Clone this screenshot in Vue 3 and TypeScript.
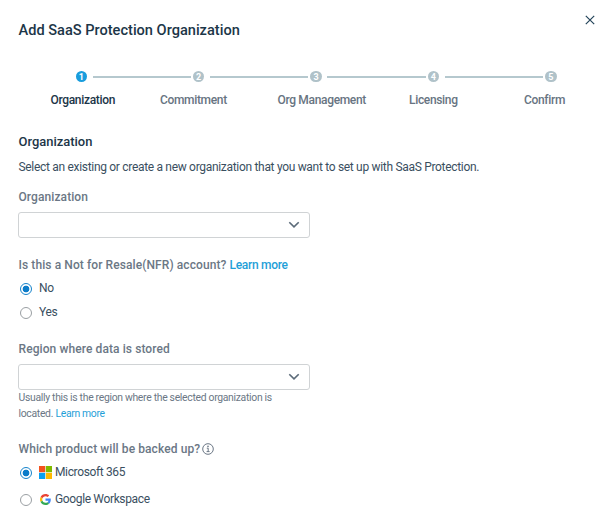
<script setup lang="ts">
import { ref } from 'vue'

interface Step {
  id: number
  label: string
}

const steps: Step[] = [
  { id: 1, label: 'Organization' },
  { id: 2, label: 'Commitment' },
  { id: 3, label: 'Org Management' },
  { id: 4, label: 'Licensing' },
  { id: 5, label: 'Confirm' },
]
const current = ref<number>(1)
const nfr = ref<'no' | 'yes'>('no')
const product = ref<'microsoft' | 'google'>('microsoft')
</script>

<template>
  <main class="dialog">
    <header class="header">
      <h1 class="title">Add SaaS Protection Organization</h1>
      <button class="close" type="button" aria-label="Close">
        <svg width="10" height="10" viewBox="0 0 10 10"><path d="M.8.8 9.2 9.2M9.2.8.8 9.2" /></svg>
      </button>
    </header>

    <nav class="stepper">
      <div class="track">
        <template v-for="step in steps" :key="step.id">
          <span class="dot" :class="{ active: step.id === current }">{{ step.id }}</span>
          <span v-if="step.id < steps.length" class="line"></span>
        </template>
      </div>
      <div class="labels">
        <span v-for="step in steps" :key="step.id" class="label" :class="{ active: step.id === current }">{{ step.label }}</span>
      </div>
    </nav>

    <h2 class="section">Organization</h2>
    <p class="intro">Select an existing or create a new organization that you want to set up with SaaS Protection.</p>

    <div class="field-label org">Organization</div>
    <div class="select" role="combobox" aria-label="Organization">
      <svg width="12" height="8" viewBox="0 0 12 8"><path d="M1.3 1.2 6 5.9 10.7 1.2" /></svg>
    </div>

    <div class="field-label nfr">Is this a Not for Resale(NFR) account? <a class="link">Learn more</a></div>
    <label class="option first" @click="nfr = 'no'">
      <span class="radio" :class="{ checked: nfr === 'no' }"></span><span class="option-text">No</span>
    </label>
    <label class="option second" @click="nfr = 'yes'">
      <span class="radio" :class="{ checked: nfr === 'yes' }"></span><span class="option-text">Yes</span>
    </label>

    <div class="field-label region">Region where data is stored</div>
    <div class="select" role="combobox" aria-label="Region where data is stored">
      <svg width="12" height="8" viewBox="0 0 12 8"><path d="M1.3 1.2 6 5.9 10.7 1.2" /></svg>
    </div>
    <div class="hint">
      <div>Usually this is the region where the selected organization is</div>
      <div class="hint-row"><span>located.</span><a class="link">Learn more</a></div>
    </div>

    <div class="field-label product">
      <span>Which product will be backed up?</span>
      <svg class="info" width="12" height="12" viewBox="0 0 12 12">
        <circle cx="6" cy="6" r="5.3" />
        <path d="M4.8 5.2H6.2V8.5M4.6 8.6H7.6" />
        <circle class="info-dot" cx="6" cy="3.4" r=".8" />
      </svg>
    </div>
    <label class="option microsoft" @click="product = 'microsoft'">
      <span class="radio" :class="{ checked: product === 'microsoft' }"></span>
      <svg class="brand" width="13" height="13" viewBox="0 0 13 13">
        <path fill="#f4511e" d="M0 0h6.2v6.2H0z" />
        <path fill="#7fba00" d="M6.8 0H13v6.2H6.8z" />
        <path fill="#0a9ff0" d="M0 6.8h6.2V13H0z" />
        <path fill="#ffb900" d="M6.8 6.8H13V13H6.8z" />
      </svg>
      <span class="option-text">Microsoft 365</span>
    </label>
    <label class="option google" @click="product = 'google'">
      <span class="radio" :class="{ checked: product === 'google' }"></span>
      <svg class="brand g" width="11" height="11" viewBox="0 0 48 48">
        <path fill="#ea4335" d="M24 9.5c3.54 0 6.71 1.22 9.21 3.6l6.85-6.85C35.9 2.38 30.47 0 24 0 14.62 0 6.51 5.38 2.56 13.22l7.98 6.19C12.43 13.72 17.74 9.5 24 9.5z" />
        <path fill="#4285f4" d="M46.98 24.55c0-1.57-.15-3.09-.38-4.55H24v9.02h12.94c-.58 2.96-2.26 5.48-4.78 7.18l7.73 6c4.51-4.18 7.09-10.36 7.09-17.65z" />
        <path fill="#fbbc05" d="M10.53 28.59c-.48-1.45-.76-2.99-.76-4.59s.27-3.14.76-4.59l-7.98-6.19C.92 16.46 0 20.12 0 24s.92 7.54 2.56 10.78l7.97-6.19z" />
        <path fill="#34a853" d="M24 48c6.48 0 11.93-2.13 15.89-5.81l-7.73-6c-2.15 1.45-4.92 2.3-8.16 2.3-6.26 0-11.57-4.22-13.47-9.91l-7.98 6.19C6.51 42.62 14.62 48 24 48z" />
      </svg>
      <span class="option-text">Google Workspace</span>
    </label>
  </main>
</template>

<style>
body {
  background: #fff;
}
</style>

<style scoped>
.dialog {
  box-sizing: border-box;
  height: 529px;
  padding: 0 0 0 18.5px;
  overflow: hidden;
  font-family: Roboto, "Liberation Sans", sans-serif;
  font-size: 12px;
  letter-spacing: -0.31px;
  color: #3a4f5f;
}
.header {
  display: flex;
  justify-content: space-between;
  height: 70px;
}
.title {
  margin: 20px 0 0;
  font-size: 14.58px;
  font-weight: 500;
  line-height: 20px;
  letter-spacing: 0;
  color: #1c3648;
}
.close {
  width: 10px;
  height: 10px;
  margin: 15px 4.5px 0 0;
  padding: 0;
  border: 0;
  background: none;
}
svg {
  display: block;
  flex: none;
}
.close path {
  fill: none;
  stroke: #24455a;
  stroke-width: 1.2;
}
.track {
  display: flex;
  align-items: center;
  height: 13px;
  width: 481px;
  margin-left: 57px;
}
.dot {
  flex: none;
  width: 11.5px;
  height: 11.5px;
  border-radius: 50%;
  background: #b0c2c9;
  color: #fff;
  font-size: 9px;
  font-weight: 700;
  line-height: 12px;
  letter-spacing: 0;
  text-align: center;
}
.dot.active {
  background: #199ddd;
}
.line {
  flex: 1;
  height: 2px;
  margin: 1px 2px 0 5.5px;
  background: #b5c8ce;
}
.labels {
  display: grid;
  grid-template-columns: 109.5px 117.5px 131.5px 115px auto;
  margin: 9px 0 0 32px;
}
.label {
  font-weight: 500;
  line-height: 16px;
  letter-spacing: -0.33px;
  white-space: nowrap;
  color: #677482;
}
.label.active {
  color: #1c3648;
}
.section {
  margin: 25px 0 0;
  font-size: 12.96px;
  font-weight: 500;
  line-height: 18px;
  letter-spacing: 0;
  color: #1c3648;
}
.intro {
  margin: 8px 0 0;
  line-height: 16px;
  white-space: nowrap;
}
.field-label {
  font-weight: 500;
  line-height: 16px;
  letter-spacing: 0.09px;
  white-space: nowrap;
  color: #6b7785;
}
.field-label.org {
  margin-top: 14px;
}
.link {
  color: #1f9fd8;
  letter-spacing: -0.31px;
}
.select {
  display: flex;
  align-items: center;
  justify-content: flex-end;
  box-sizing: border-box;
  width: 292px;
  height: 26px;
  margin: 7px 0 0 -0.5px;
  padding-right: 9px;
  border: 1px solid #d0d3d5;
  border-radius: 3px;
}
.select path {
  fill: none;
  stroke: #5c6b79;
  stroke-width: 1.6;
}
.field-label.nfr {
  margin-top: 19px;
}
.option {
  display: flex;
  align-items: center;
  height: 16px;
  padding-left: 1.5px;
}
.option-text {
  line-height: 14px;
  padding-bottom: 2px;
  letter-spacing: -0.36px;
}
.option.first {
  margin-top: 8px;
}
.option.second {
  margin-top: 8px;
}
.radio {
  box-sizing: border-box;
  flex: none;
  width: 12px;
  height: 12px;
  margin-right: 7px;
  border: 1px solid #9a9fa3;
  border-radius: 50%;
}
.radio.checked {
  border-color: #1683cb;
  background: radial-gradient(circle, #0c7cc9 3px, #fff 3.7px);
}
.field-label.region {
  margin-top: 20px;
}
.hint {
  width: 270px;
  font-size: 10.4px;
  line-height: 16px;
  letter-spacing: -0.31px;
  white-space: nowrap;
  color: #6b7785;
}
.hint-row {
  display: flex;
  gap: 2.5px;
}
.hint .link {
  letter-spacing: -0.35px;
}
.field-label.product {
  display: flex;
  align-items: center;
  margin-top: 19px;
}
.info {
  margin-left: 2px;
  fill: none;
  stroke: #6b7785;
  stroke-width: 1;
}
.info-dot {
  fill: #6b7785;
  stroke: none;
}
.option.microsoft {
  margin-top: 8px;
}
.option.google {
  margin-top: 11px;
}
.brand {
  margin: 0 3px 1px 0;
}
.brand.g {
  margin: 0 4px 2px 1px;
}
</style>
